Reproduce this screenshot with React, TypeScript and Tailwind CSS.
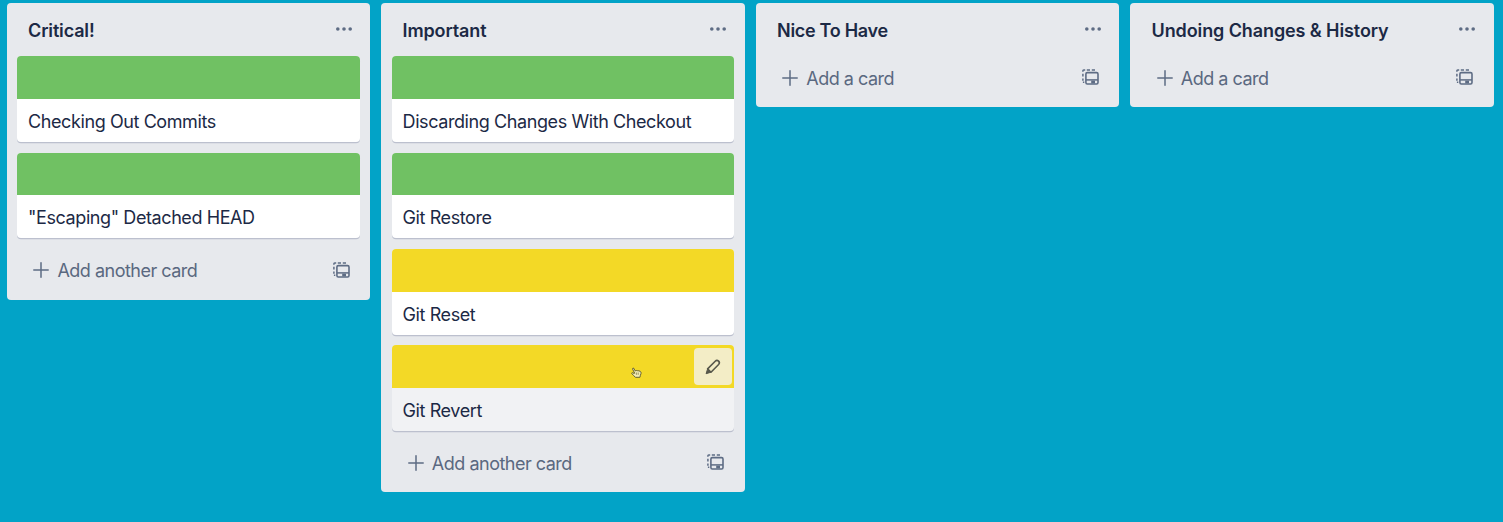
import React from "react";

type CardData = { title: string; cover: "green" | "yellow"; active?: boolean };
type ListData = { title: string; tracking: string; cards: CardData[] };

const lists: ListData[] = [
  {
    title: "Critical!",
    tracking: "tracking-[-0.15px]",
    cards: [
      { title: "Checking Out Commits", cover: "green" },
      { title: '"Escaping" Detached HEAD', cover: "green" },
    ],
  },
  {
    title: "Important",
    tracking: "tracking-[-0.12px]",
    cards: [
      { title: "Discarding Changes With Checkout", cover: "green" },
      { title: "Git Restore", cover: "green" },
      { title: "Git Reset", cover: "yellow" },
      { title: "Git Revert", cover: "yellow", active: true },
    ],
  },
  { title: "Nice To Have", tracking: "tracking-[-0.3px]", cards: [] },
  { title: "Undoing Changes & History", tracking: "tracking-[-0.1px]", cards: [] },
];

function DotsIcon() {
  return (
    <svg className="mb-px h-[6px] w-[18px]" viewBox="0 0 18 6" fill="#5e6c84">
      <circle cx="2.8" cy="3" r="1.8" />
      <circle cx="9" cy="3" r="1.8" />
      <circle cx="15.2" cy="3" r="1.8" />
    </svg>
  );
}

function PlusIcon() {
  return (
    <svg className="size-4" viewBox="0 0 16 16" fill="none" stroke="#5e6c84" strokeWidth="1.5" strokeLinecap="round">
      <path d="M8 .8v14.4M.8 8h14.4" />
    </svg>
  );
}

function TemplateIcon() {
  return (
    <svg className="h-4 w-[17px]" viewBox="0 0 17 16" fill="none" stroke="#5e6c84">
      <path d="M.9 2.8V1.7Q.9.9 1.7.9h1.5M4.8.9h3.2M9.8.9h3.2M.9 4.8v2.8M.9 9.4v2.4M.9 13.3h1.4" strokeWidth="1.5" />
      <rect x="3.9" y="3.6" width="12.1" height="11.4" rx="1.4" strokeWidth="1.6" />
      <path d="M4 10.9h12" strokeWidth="1.5" />
      <path d="M9.2 13h3.8" strokeWidth="2.8" />
    </svg>
  );
}

function PencilIcon() {
  return (
    <svg className="size-[18px]" viewBox="0 0 18 18" fill="none" stroke="#57584b" strokeWidth="1.6" strokeLinejoin="round">
      <path d="M3.6 10.9 11.2 3.2Q12.9 1.5 14.6 3.1 16.2 4.8 14.6 6.5L7 14.2Z" />
      <path d="M3.6 10.9 2.1 15.7 7 14.2Z" fill="#57584b" strokeWidth="1" />
    </svg>
  );
}

function HandCursor() {
  return (
    <svg className="absolute left-[239px] top-[22px] h-[11px] w-[11px]" viewBox="0 0 11 11" fill="#f4edb4" stroke="#55532e" strokeWidth=".9" strokeLinejoin="round">
      <path d="M3.7 6.2 1.6 2.2Q1.4 1 2.5 1L4.2 3.9 5.3 3.5 6.5 3.7 7.8 3.8 9.2 4.3Q10.3 4.8 10 6.5L9.4 8.3 8.9 10.3H4.4L2.8 8.7.8 6.6Q.6 5.6 1.6 5.7L3 6.5Z" />
      <path d="M5.4 5.5v2.3M7.2 5.5v2.3" strokeWidth=".6" />
    </svg>
  );
}

function Card({ card }: { card: CardData }) {
  return (
    <article
      className={`relative h-[85.6px] overflow-hidden rounded-[4px] shadow-[0_1.3px_0_#bcc0ce] ${card.active ? "bg-[#f1f2f4]" : "bg-white"}`}
    >
      <div className={`h-[42.7px] ${card.cover === "green" ? "bg-[#70c163]" : "bg-[#f3d926]"}`} />
      <h3 className="px-[10.7px] pt-[9px] text-[18px] leading-[27px] tracking-[-0.41px] text-[#1c2945]">{card.title}</h3>
      {card.active && (
        <>
          <HandCursor />
          <button className="absolute right-[2.7px] top-[2.7px] flex size-[37.4px] items-center justify-center rounded-[4px] bg-[#f3edc6]">
            <PencilIcon />
          </button>
        </>
      )}
    </article>
  );
}

function List({ list }: { list: ListData }) {
  return (
    <section className="w-[363.8px] shrink-0 rounded-[4px] bg-[#e7e9ed] px-[10.7px]">
      <header className="flex h-[53.6px] items-center justify-between pl-[10.7px] pr-[7px]">
        <h2 className={`pt-px text-[18px] font-semibold leading-[27px] text-[#1c2945] ${list.tracking}`}>{list.title}</h2>
        <DotsIcon />
      </header>
      <div className="flex flex-col gap-[10.7px]">
        {list.cards.map((card) => (
          <Card key={card.title} card={card} />
        ))}
      </div>
      <footer className={`flex h-[50.7px] items-start justify-between pl-[16px] pr-[10px] ${list.cards.length ? "mt-[10.6px]" : ""}`}>
        <button className="flex h-[42.6px] items-center gap-2 text-[18px] leading-[27px] tracking-[-0.5px] text-[#5a6880]">
          <PlusIcon />
          <span className="pt-px">{list.cards.length ? "Add another card" : "Add a card"}</span>
        </button>
        <button className="flex h-[41.4px] items-center">
          <TemplateIcon />
        </button>
      </footer>
    </section>
  );
}

export default function App() {
  return (
    <main className="flex h-screen items-start gap-[10.7px] overflow-hidden bg-[#02a3c7] pl-[6.7px] pt-[2.9px] font-['Inter','Liberation_Sans',sans-serif]">
      {lists.map((list) => (
        <List key={list.title} list={list} />
      ))}
    </main>
  );
}
